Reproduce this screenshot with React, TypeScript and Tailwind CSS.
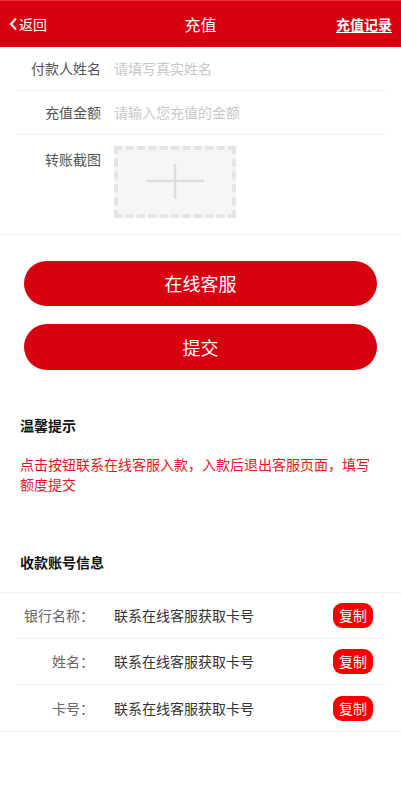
import { useState } from "react";

const accountRows = [
  { label: "银行名称：", value: "联系在线客服获取卡号" },
  { label: "姓名：", value: "联系在线客服获取卡号" },
  { label: "卡号：", value: "联系在线客服获取卡号" },
];

const FormRow = ({
  label,
  placeholder,
  value,
  onChange,
}: {
  label: string;
  placeholder: string;
  value: string;
  onChange: (v: string) => void;
}) => (
  <div className="mx-4 flex h-[44px] items-center border-b border-[#f0f0f0]">
    <div className="w-[85px] shrink-0 text-right text-[14px] text-[#555]">{label}</div>
    <input
      value={value}
      onChange={(e) => onChange(e.target.value)}
      placeholder={placeholder}
      className="ml-[13px] flex-1 bg-transparent text-[14px] text-[#333] outline-none placeholder:text-[#c8c8c8]"
    />
  </div>
);

const App = () => {
  const [name, setName] = useState("");
  const [amount, setAmount] = useState("");

  return (
    <div
      className="min-h-[793px] bg-white"
      style={{ fontFamily: '"Microsoft YaHei", "Noto Sans CJK SC", sans-serif' }}
    >
      {/* top bar */}
      <div className="border-t border-[#e8333d] bg-[#d7000f]">
        <div className="flex h-[46px] items-center justify-between px-[9px] text-white">
          <button className="flex w-[80px] items-center text-[14px]">
            <svg width="9" height="14" viewBox="0 0 9 14" className="mr-[1px]">
              <path d="M7 1.5L2 7l5 5.5" fill="none" stroke="#fff" strokeWidth="2" />
            </svg>
            返回
          </button>
          <div className="text-[16px]">充值</div>
          <button className="w-[80px] text-right text-[14px] font-bold underline underline-offset-2">
            充值记录
          </button>
        </div>
      </div>

      {/* form */}
      <div className="border-b border-[#f0f0f0] pb-[16px]">
        <FormRow label="付款人姓名" placeholder="请填写真实姓名" value={name} onChange={setName} />
        <FormRow label="充值金额" placeholder="请输入您充值的金额" value={amount} onChange={setAmount} />
        <div className="mx-4 flex pt-[11px]">
          <div className="w-[85px] shrink-0 pt-[3px] text-right text-[14px] text-[#555]">转账截图</div>
          <div className="ml-[13px] flex h-[72px] w-[122px] items-center justify-center border-[4px] border-dashed border-[#e4e4e4] bg-[#f6f6f8]">
            <svg width="60" height="36" viewBox="0 0 60 36">
              <path d="M1 17h58M30 0v35" stroke="#dedede" strokeWidth="2.5" />
            </svg>
          </div>
        </div>
      </div>

      {/* actions */}
      <div className="flex flex-col gap-[18px] px-6 pt-[26px]">
        <button className="h-[45px] rounded-full bg-[#d7000f] text-[18px] text-white">在线客服</button>
        <button className="h-[46px] rounded-full bg-[#d7000f] text-[18px] text-white">提交</button>
      </div>

      {/* notice */}
      <div className="px-5 pt-[45px]">
        <div className="text-[14px] font-bold text-[#111]">温馨提示</div>
        <p className="mt-[18px] text-[14px] leading-[20px] text-[#e8161e]">
          点击按钮联系在线客服入款，入款后退出客服页面，填写额度提交
        </p>
        <div className="mt-[58px] text-[14px] font-bold text-[#111]">收款账号信息</div>
      </div>

      {/* account info */}
      <div className="mt-[19px] border-y border-[#f0f0f0]">
        {accountRows.map((row, i) => (
          <div
            key={i}
            className={`mx-4 flex h-[46px] items-center ${i < accountRows.length - 1 ? "border-b border-[#f0f0f0]" : ""}`}
          >
            <div className="w-[78px] shrink-0 text-right text-[14px] text-[#666]">{row.label}</div>
            <div className="ml-[20px] flex-1 text-[14px] text-[#333]">{row.value}</div>
            <button className="mr-[12px] h-[25px] w-[40px] rounded-[9px] bg-[#f70000] text-[14px] text-white">
              复制
            </button>
          </div>
        ))}
      </div>
    </div>
  );
};

export default App;
